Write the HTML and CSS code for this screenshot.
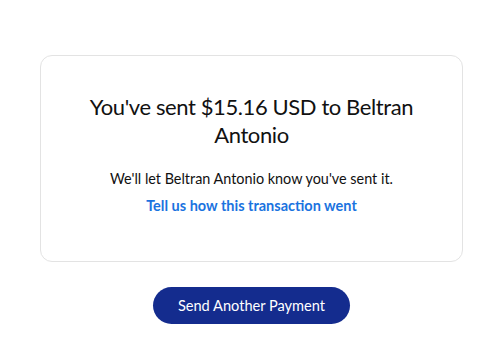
FILE: index.html
```html
<!DOCTYPE html>
<html>
<head>
<meta charset="utf-8">
<link rel="stylesheet" href="styles.css">
</head>
<body>
<main class="page">
  <section class="card">
    <h1 class="title">You've sent $15.16 USD to Beltran Antonio</h1>
    <p class="note">We'll let Beltran Antonio know you've sent it.</p>
    <a class="feedback" href="#">Tell us how this transaction went</a>
  </section>
  <div class="actions">
    <button class="primary">Send Another Payment</button>
  </div>
</main>
</body>
</html>
```
FILE: styles.css
```css
html, body {
  margin: 0;
  padding: 0;
  background: #ffffff;
}
body {
  font-family: Lato, "Noto Sans", sans-serif;
  color: #111;
}
.page {
  padding: 55px 37px 0 40px;
}
.card {
  box-sizing: border-box;
  width: 423px;
  height: 207px;
  border: 1px solid #e3e3e3;
  border-radius: 12px;
  padding: 37px 20px 0;
  display: flex;
  flex-direction: column;
  align-items: center;
  text-align: center;
}
.title {
  margin: 0;
  font-size: 22px;
  font-weight: 400;
  line-height: 28px;
  letter-spacing: -0.4px;
  width: 340px;
}
.note {
  margin: 20px 0 0;
  font-size: 14.4px;
  line-height: 20px;
}
.feedback {
  margin-top: 7px;
  font-size: 14.5px;
  line-height: 20px;
  font-weight: 700;
  color: #1a73e0;
  text-decoration: none;
}
.actions {
  display: flex;
  justify-content: center;
  padding-top: 25px;
}
.primary {
  width: 197px;
  height: 37px;
  border: none;
  border-radius: 19px;
  background: #142c8e;
  color: #fff;
  font-family: inherit;
  font-size: 14.6px;
}
```
